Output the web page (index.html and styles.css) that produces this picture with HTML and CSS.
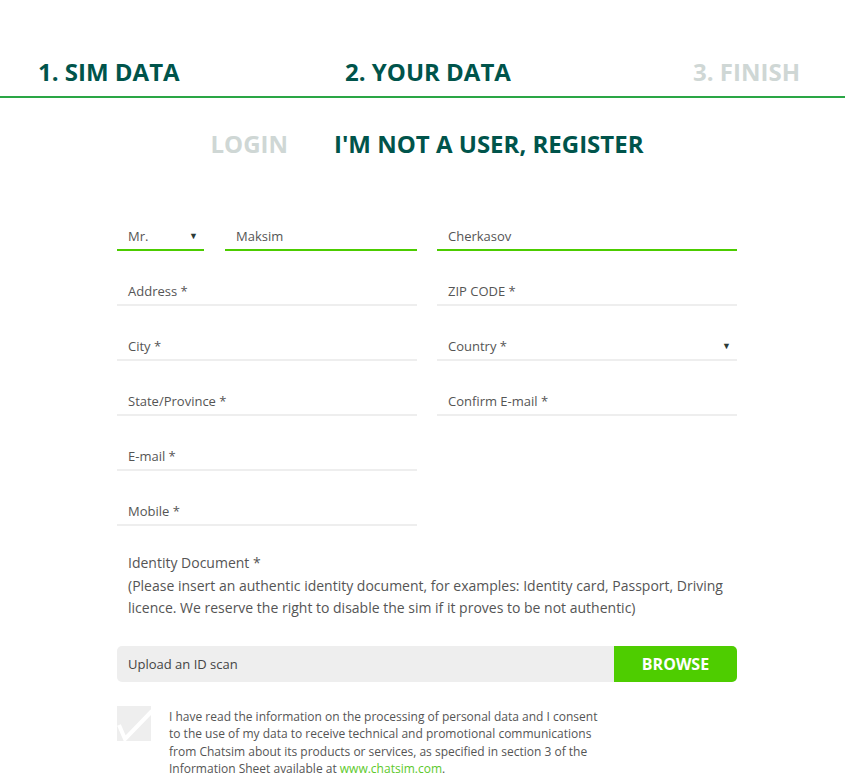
FILE: index.html
```html
<!DOCTYPE html>
<html>
<head>
  <link rel="stylesheet" href="styles.css">
</head>
<body>
  <div class="steps">
    <div class="step done">1. SIM DATA</div>
    <div class="step active">2. YOUR DATA</div>
    <div class="step todo">3. FINISH</div>
  </div>

  <div class="tabs">
    <span class="tab off">LOGIN</span>
    <span class="tab on">I'M NOT A USER, REGISTER</span>
  </div>

  <div class="form">
    <div class="cols">
      <div class="col">
        <div class="row">
          <div class="field filled title">Mr.<span class="arrow">&#9660;</span></div>
          <div class="field filled grow">Maksim</div>
        </div>
        <div class="field">Address *</div>
        <div class="field">City *</div>
        <div class="field">State/Province *</div>
        <div class="field">E-mail *</div>
        <div class="field">Mobile *</div>
      </div>
      <div class="col">
        <div class="field filled">Cherkasov</div>
        <div class="field">ZIP CODE *</div>
        <div class="field">Country *<span class="arrow">&#9660;</span></div>
        <div class="field">Confirm E-mail *</div>
      </div>
    </div>

    <p class="doc">Identity Document *<br>(Please insert an authentic identity document, for examples: Identity card, Passport, Driving licence. We reserve the right to disable the sim if it proves to be not authentic)</p>

    <div class="upload">
      <span class="upload-label">Upload an ID scan</span>
      <button class="browse-btn">BROWSE</button>
    </div>

    <div class="consent">
      <div class="check">
        <svg width="35" height="35" viewBox="0 0 35 35">
          <polyline points="2,19 8,33 35,5" fill="none" stroke="#fff" stroke-width="4"/>
        </svg>
      </div>
      <p class="consent-text">I have read the information on the processing of personal data and I consent to the use of my data to receive technical and promotional communications from Chatsim about its products or services, as specified in section 3 of the Information Sheet available at <a href="#">www.chatsim.com</a>.</p>
    </div>
  </div>
</body>
</html>
```

FILE: styles.css
```css
body {
  margin: 0;
  font-family: 'Open Sans', 'Liberation Sans', sans-serif;
  color: #555;
  background: #fff;
}
.steps {
  display: grid;
  grid-template-columns: 307px 1fr auto;
  padding: 56px 45px 8px 38px;
  border-bottom: 2px solid #2aa645;
}
.step {
  font-size: 24px;
  font-weight: 700;
  line-height: 32px;
}
.step.done, .step.active {
  color: #00544b;
}
.step.todo {
  color: #cfd7d5;
}
.tabs {
  display: flex;
  justify-content: center;
  gap: 46px;
  margin-top: 30px;
  padding-left: 9px;
}
.tab {
  font-size: 24px;
  font-weight: 700;
  line-height: 32px;
}
.tab.off {
  color: #cfd7d5;
}
.tab.on {
  color: #00544b;
}
.form {
  width: 620px;
  margin: 55px 0 0 117px;
}
.cols {
  display: grid;
  grid-template-columns: 300px 300px;
  gap: 20px;
}
.col {
  display: flex;
  flex-direction: column;
  gap: 19px;
}
.row {
  display: flex;
  gap: 21px;
}
.field {
  position: relative;
  padding: 11px 11px 3px;
  line-height: 20px;
  font-size: 13px;
  color: #555;
  border-bottom: 2px solid #eee;
}
.field.filled {
  border-bottom: 2px solid #4ccc00;
}
.field.title {
  width: 65px;
}
.field.grow {
  flex: 1;
}
.arrow {
  position: absolute;
  right: 6px;
  top: 11px;
  font-size: 9px;
  color: #2c3a37;
}
.doc {
  margin: 26px 0 0;
  padding: 0 11px;
  font-size: 14px;
  line-height: 22.5px;
  color: #555;
}
.upload {
  display: flex;
  align-items: stretch;
  height: 36px;
  margin-top: 26px;
  background: #eee;
  border-radius: 5px;
}
.upload-label {
  flex: 1;
  padding-left: 11px;
  line-height: 36px;
  font-size: 13px;
  color: #444;
}
.browse-btn {
  width: 123px;
  border: none;
  border-radius: 0 5px 5px 0;
  background: #4ecd00;
  color: #fff;
  font-family: 'Open Sans', 'Liberation Sans', sans-serif;
  font-size: 16px;
  font-weight: 700;
}
.consent {
  display: flex;
  gap: 18px;
  margin-top: 24px;
}
.check {
  width: 34px;
  height: 35px;
  flex: none;
  background: #eee;
  overflow: hidden;
}
.check svg {
  display: block;
}
.consent-text {
  width: 440px;
  margin: 2px 0 0;
  font-size: 12px;
  line-height: 17.5px;
  color: #555;
}
.consent-text a {
  color: #5cc92b;
  text-decoration: none;
}
```
